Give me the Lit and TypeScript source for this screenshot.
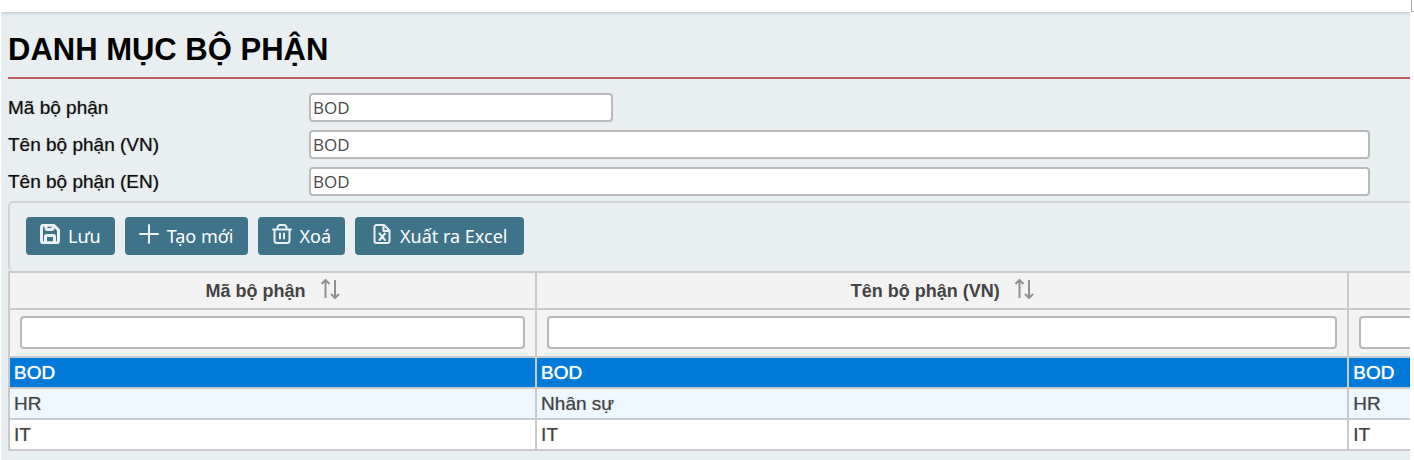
import { LitElement, html, css, svg, nothing } from "lit";
import { customElement, state } from "lit/decorators.js";

interface Department {
  code: string;
  nameVn: string;
  nameEn: string;
}

const saveIcon = svg`<svg class="icon heavy" viewBox="0 0 20 20" aria-hidden="true">
  <path d="M1.500 3.200a2 2 0 0 1 2-2H13.500L18.500 6v10.800a2 2 0 0 1-2 2h-13a2 2 0 0 1-2-2z M6 1.500v2.500a1.500 1.500 0 0 0 1.500 1.500h4a1.500 1.500 0 0 0 1.500-1.500v-2.500 M5.500 18.500v-6a1 1 0 0 1 1-1h7a1 1 0 0 1 1 1v6" />
</svg>`;
const plusIcon = svg`<svg class="icon" viewBox="0 0 20 20" aria-hidden="true">
  <path d="M10 1v18M1 10h18" />
</svg>`;
const trashIcon = svg`<svg class="icon" viewBox="0 0 20 20" aria-hidden="true">
  <path d="M1 5.500h18M2.500 5.500v11a2.500 2.500 0 0 0 2.500 2.500h10a2.500 2.500 0 0 0 2.500-2.500v-11M5.500 5V3.500a2.500 2.500 0 0 1 2.500-2.500h4a2.500 2.500 0 0 1 2.500 2.500v1.500M8 9.500v5M12 9.500v5" />
</svg>`;
const excelIcon = svg`<svg class="icon" viewBox="0 0 20 20" aria-hidden="true">
  <path d="M2.500 3a2 2 0 0 1 2-2H12l5.500 5.500V17a2 2 0 0 1-2 2h-11a2 2 0 0 1-2-2zM11.500 1.500V7H17M7.500 9.500l5.500 6.500M13 9.500l-5.500 6.500" />
</svg>`;
const sortIcon = svg`<svg class="sort-icon" viewBox="0 0 20 20" aria-hidden="true">
  <path d="M5.500 19V1.500M1.500 5l4-4 4 4M15 1v17.500M11 15l4 4 4-4" />
</svg>`;

@customElement("app-root")
export class AppRoot extends LitElement {
  static styles = css`
    :host {
      display: block;
      min-height: 100vh;
      background: #fff;
      color: #111;
      font-family: "Liberation Sans", Arial, sans-serif;
      font-size: 19px;
      line-height: 24px;
    }
    * {
      box-sizing: border-box;
    }
    .shell {
      display: flex;
      min-height: 100vh;
      padding-left: 1px;
      overflow: hidden;
    }
    .page {
      flex: 1;
      min-width: 0;
      display: flex;
      flex-direction: column;
      background: #e9eef1;
      overflow: hidden;
    }
    .gutter {
      flex: none;
      width: 4px;
    }
    .corner {
      width: 8px;
      height: 12px;
      margin-left: 1px;
      border: 1px solid #aaa;
      border-top: 0;
    }
    .topbar {
      height: 12px;
      background: #fff;
      box-shadow: 0 1px 3px #b8bfc2;
    }
    .content {
      padding: 20px 0 8px 7px;
    }
    .title {
      margin: 0;
      padding-bottom: 9px;
      border-bottom: 2px solid #bd5e60;
      font-size: 31px;
      line-height: 36px;
      color: #000;
    }
    .form {
      display: grid;
      grid-template-columns: 301px 1fr;
      row-gap: 8px;
      padding: 14px 40px 5px 0;
      align-items: center;
    }
    .label {
      text-shadow: 0 0 1px #777;
    }
    .field {
      width: 100%;
      height: 29px;
      padding: 0 2px;
      border: 2px solid #b9b9b9;
      border-radius: 4px;
      background: #fff;
      color: #4a4a4a;
      font: 17px "Open Sans", sans-serif;
    }
    .short {
      width: 304px;
    }
    .toolbar {
      display: flex;
      gap: 10px;
      margin-right: -8px;
      padding: 14px 16px 16px;
      border: 2px solid #d0d3d4;
      border-bottom: 0;
      border-radius: 5px;
    }
    .button {
      display: flex;
      align-items: center;
      gap: 8px;
      height: 38px;
      padding: 0 14px;
      border: 0;
      border-radius: 4px;
      background: #3e7389;
      color: #fff;
      font: 18px/24px "Noto Sans", sans-serif;
    }
    .wide {
      padding: 0 17px;
    }
    .icon {
      width: 20px;
      height: 20px;
      margin-bottom: 4px;
      fill: none;
      stroke: #e9f1f4;
      stroke-width: 2;
      stroke-linejoin: round;
      stroke-linecap: round;
    }
    .heavy {
      stroke-width: 3;
    }
    .table {
      width: 153.6%;
      table-layout: fixed;
      border-collapse: collapse;
      color: #444;
    }
    .col-code {
      width: 24.5%;
    }
    .head {
      height: 37px;
      padding: 0;
      border: 2px solid #cacaca;
      background: #f3f3f3;
      font-size: 18px;
      font-weight: bold;
    }
    .sort {
      display: inline-flex;
      align-items: center;
      gap: 14px;
      padding: 0;
      border: 0;
      background: none;
      color: inherit;
      font: inherit;
    }
    .sort-icon {
      width: 20px;
      height: 20px;
      margin-bottom: 3px;
      fill: none;
      stroke: #909090;
      stroke-width: 2;
    }
    .filter-cell {
      height: 48px;
      padding: 0 10px 2px;
      border: 2px solid #cacaca;
      background: #f3f3f3;
    }
    .filter {
      display: block;
      height: 33px;
    }
    .cell {
      height: 31px;
      padding: 0 4px;
      border: 2px solid #cacaca;
      background: #fff;
      text-shadow: 0 0 1px #999;
    }
    .alt .cell {
      background: #eff7ff;
    }
    .selected .cell {
      background: #007ad9;
      color: #fff;
      text-shadow: 0 0 1px #fff;
    }
  `;

  @state() private selected = 0;

  private rows: Department[] = [
    { code: "BOD", nameVn: "BOD", nameEn: "BOD" },
    { code: "HR", nameVn: "Nhân sự", nameEn: "HR" },
    { code: "IT", nameVn: "IT", nameEn: "IT" },
  ];

  private columns = [
    { label: "Mã bộ phận", sortable: true },
    { label: "Tên bộ phận (VN)", sortable: true },
    { label: "Tên bộ phận (EN)", sortable: false },
  ];

  private rowClass(index: number) {
    if (index === this.selected) return "selected";
    return index % 2 ? "alt" : "";
  }

  render() {
    const current = this.rows[this.selected];
    return html`
      <div class="shell">
        <main class="page">
          <div class="topbar"></div>
          <div class="content">
            <h1 class="title">DANH MỤC BỘ PHẬN</h1>
            <form class="form">
              <label class="label" for="code">Mã bộ phận</label>
              <input id="code" class="field short" .value=${current.code} />
              <label class="label" for="name-vn">Tên bộ phận (VN)</label>
              <input id="name-vn" class="field" .value=${current.nameVn} />
              <label class="label" for="name-en">Tên bộ phận (EN)</label>
              <input id="name-en" class="field" .value=${current.nameEn} />
            </form>
            <div class="toolbar">
              <button class="button" type="button">${saveIcon}<span>Lưu</span></button>
              <button class="button" type="button">${plusIcon}<span>Tạo mới</span></button>
              <button class="button" type="button">${trashIcon}<span>Xoá</span></button>
              <button class="button wide" type="button">${excelIcon}<span>Xuất ra Excel</span></button>
            </div>
            <table class="table">
              <colgroup>
                <col class="col-code" />
                <col />
                <col />
              </colgroup>
              <thead>
                <tr>
                  ${this.columns.map(
                    (column) => html`<th class="head" scope="col" aria-label=${column.label}>
                      ${column.sortable
                        ? html`<button class="sort" type="button">${column.label}${sortIcon}</button>`
                        : nothing}
                    </th>`
                  )}
                </tr>
                <tr>
                  ${this.columns.map(
                    (column) => html`<td class="filter-cell">
                      <input class="field filter" aria-label=${column.label} />
                    </td>`
                  )}
                </tr>
              </thead>
              <tbody>
                ${this.rows.map(
                  (row, i) => html`<tr class=${this.rowClass(i)} @click=${() => (this.selected = i)}>
                    <td class="cell">${row.code}</td>
                    <td class="cell">${row.nameVn}</td>
                    <td class="cell">${row.nameEn}</td>
                  </tr>`
                )}
              </tbody>
            </table>
          </div>
        </main>
        <div class="gutter"><div class="corner"></div></div>
      </div>
    `;
  }
}
